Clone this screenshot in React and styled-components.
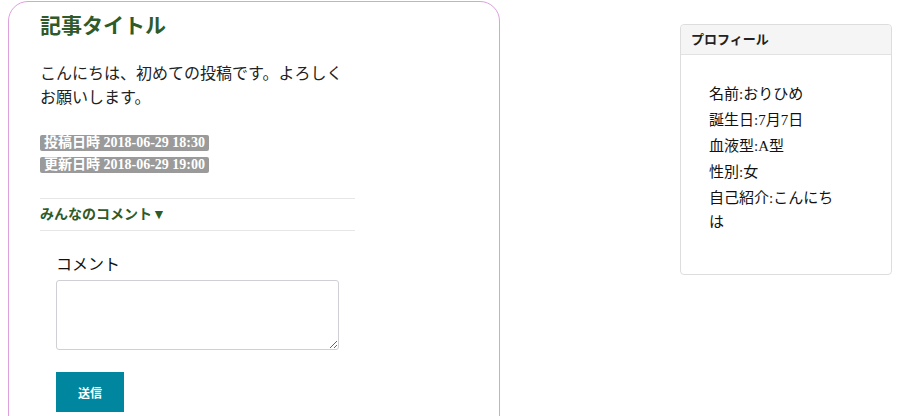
import React from "react";
import styled, { createGlobalStyle } from "styled-components";

const GlobalStyle = createGlobalStyle`
  body {
    margin: 0 8px;
    background: #ffffff;
    font-family: "Liberation Serif", "Noto Sans CJK JP", serif;
    color: #222222;
  }
`;

const SANS = `"Liberation Sans", "Noto Sans CJK JP", sans-serif`;

const Page = styled.div`
  display: flex;
  justify-content: space-between;
  align-items: flex-start;
  height: 416px;
  overflow: hidden;
`;

const ArticleCard = styled.div`
  box-sizing: border-box;
  width: 492px;
  min-height: 470px;
  margin-top: 1px;
  padding: 11px 30px 40px 31px;
  border: 1px solid #dda0dd;
  border-radius: 20px;
`;

const Title = styled.h2`
  margin: 0;
  font-family: ${SANS};
  font-size: 21px;
  line-height: 25px;
  font-weight: bold;
  color: #2f5a29;
`;

const Body = styled.p`
  width: 315px;
  margin: 24px 0 25px;
  font-size: 16px;
  line-height: 24px;
  color: #222222;
`;

const Stamp = styled.div`
  margin-bottom: 6px;
  font-size: 13px;
  line-height: 16px;
  & > span {
    display: inline-block;
    vertical-align: top;
    padding: 0 4px;
    background: #9a9a9a;
    color: #ffffff;
    font-size: 14px;
    line-height: 16px;
    font-weight: 600;
    border-radius: 2px;
  }
`;

const CommentToggle = styled.div`
  width: 315px;
  margin-top: 25px;
  padding: 6px 0;
  border-top: 1px solid #e6e6e6;
  border-bottom: 1px solid #e6e6e6;
  font-family: ${SANS};
  font-size: 14px;
  line-height: 19px;
  font-weight: bold;
  color: #2f5a29;
`;

const CommentForm = styled.form`
  padding: 22px 0 0 16px;
`;

const Label = styled.label`
  display: block;
  font-size: 16px;
  line-height: 24px;
  color: #111111;
`;

const TextBox = styled.textarea`
  display: block;
  box-sizing: border-box;
  width: 283px;
  height: 70px;
  margin-top: 3px;
  border: 1px solid #cfcfd6;
  border-radius: 3px;
  resize: both;
`;

const SendButton = styled.button`
  display: block;
  width: 68px;
  height: 40px;
  margin-top: 22px;
  border: none;
  border-radius: 0;
  background: #00879f;
  color: #ffffff;
  font-family: ${SANS};
  font-size: 12px;
  font-weight: bold;
`;

const ProfileCard = styled.div`
  box-sizing: border-box;
  width: 212px;
  margin-top: 24px;
  border: 1px solid #dddddd;
  border-radius: 4px;
`;

const ProfileHeader = styled.div`
  height: 29px;
  padding: 0 10px;
  background: #f5f5f5;
  border-bottom: 1px solid #e2e2e2;
  border-radius: 4px 4px 0 0;
  font-family: ${SANS};
  font-size: 13px;
  line-height: 29px;
  font-weight: bold;
  color: #222222;
`;

const ProfileList = styled.ul`
  list-style: none;
  width: 138px;
  margin: 0;
  padding: 27px 0 38px 28px;
`;

const ProfileItem = styled.li`
  font-size: 15px;
  line-height: 24px;
  margin-bottom: 2px;
  color: #111111;
`;

const profile = [
  "名前:おりひめ",
  "誕生日:7月7日",
  "血液型:A型",
  "性別:女",
  "自己紹介:こんにちは",
];

export default function App() {
  return (
    <>
      <GlobalStyle />
      <Page>
        <ArticleCard>
          <Title>記事タイトル</Title>
          <Body>こんにちは、初めての投稿です。よろしくお願いします。</Body>
          <Stamp>
            <span>投稿日時 2018-06-29 18:30</span>
          </Stamp>
          <Stamp>
            <span>更新日時 2018-06-29 19:00</span>
          </Stamp>
          <CommentToggle>みんなのコメント▼</CommentToggle>
          <CommentForm onSubmit={(e) => e.preventDefault()}>
            <Label>コメント</Label>
            <TextBox />
            <SendButton type="submit">送信</SendButton>
          </CommentForm>
        </ArticleCard>
        <ProfileCard>
          <ProfileHeader>プロフィール</ProfileHeader>
          <ProfileList>
            {profile.map((item) => (
              <ProfileItem key={item}>{item}</ProfileItem>
            ))}
          </ProfileList>
        </ProfileCard>
      </Page>
    </>
  );
}
